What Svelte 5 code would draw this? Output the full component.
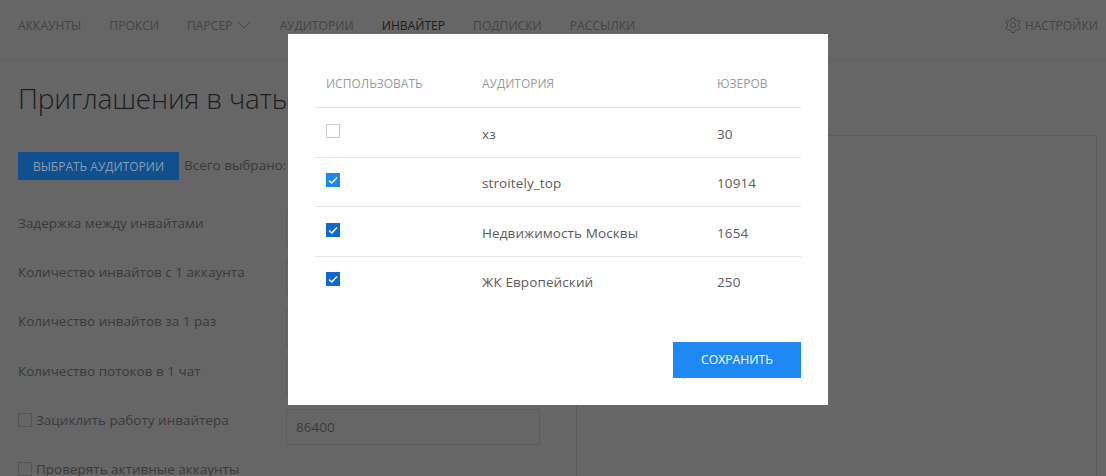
<script lang="ts">
  const navItems = [
    { label: "Аккаунты" },
    { label: "Прокси" },
    { label: "Парсер", caret: true },
    { label: "Аудитории" },
    { label: "Инвайтер", active: true },
    { label: "Подписки" },
    { label: "Рассылки" },
  ];

  const fields = [
    { label: "Задержка между инвайтами", value: "" },
    { label: "Количество инвайтов с 1 аккаунта", value: "" },
    { label: "Количество инвайтов за 1 раз", value: "" },
    { label: "Количество потоков в 1 чат", value: "" },
    { label: "Зациклить работу инвайтера", value: "86400", check: true },
  ];

  let audiences = $state([
    { name: "хз", users: 30, used: false },
    { name: "stroitely_top", users: 10914, used: true, tone: "light" },
    { name: "Недвижимость Москвы", users: 1654, used: true },
    { name: "ЖК Европейский", users: 250, used: true },
  ]);
</script>

<div class="page">
  <header class="topbar">
    <nav class="nav">
      {#each navItems as item}
        <span class="nav-item" class:active={item.active}>
          {item.label}
          {#if item.caret}
            <svg class="caret" viewBox="0 0 14 8" fill="none" stroke="currentColor" stroke-width="1">
              <polyline points="1 1 7 7 13 1"></polyline>
            </svg>
          {/if}
        </span>
      {/each}
    </nav>
    <span class="settings">
      <svg class="gear" viewBox="0 0 24 24" fill="none" stroke="currentColor" stroke-width="1.3">
        <circle cx="12" cy="12" r="3.4"></circle>
        <path d="M10 2.5h4l.6 3 2.1 1.2 2.9-1 2 3.4-2.3 2v2.4l2.3 2-2 3.4-2.9-1-2.1 1.2-.6 3h-4l-.6-3-2.1-1.2-2.9 1-2-3.4 2.3-2v-2.4l-2.3-2 2-3.4 2.9 1 2.1-1.2z"></path>
      </svg>
      Настройки
    </span>
  </header>

  <main class="content">
    <h1>Приглашения в чаты</h1>
    <div class="columns">
      <div class="form">
        <div class="picker">
          <button type="button" class="pick-btn">Выбрать аудитории</button>
          <span class="picked">Всего выбрано: 12818</span>
        </div>
        {#each fields as field}
          <div class="field">
            <label class="field-label">
              {#if field.check}<span class="box"></span>{/if}
              {field.label}
            </label>
            <div class="input">{field.value}</div>
          </div>
        {/each}
        <div class="field">
          <label class="field-label"><span class="box"></span>Проверять активные аккаунты</label>
        </div>
      </div>
      <div class="log"></div>
    </div>
  </main>
</div>

<div class="modal" role="dialog">
  <table>
    <thead>
      <tr>
        <th class="col-use">Использовать</th>
        <th class="col-name">Аудитория</th>
        <th>Юзеров</th>
      </tr>
    </thead>
    <tbody>
      {#each audiences as row}
        <tr>
          <td class="col-use">
            <span class="check" class:on={row.used} class:light={row.tone === "light"}>
              {#if row.used}
                <svg viewBox="0 0 14 14" fill="none" stroke="#fff" stroke-width="1.4">
                  <polyline points="3 7.5 5.8 10 11 4.5"></polyline>
                </svg>
              {/if}
            </span>
          </td>
          <td class="col-name">{row.name}</td>
          <td>{row.users}</td>
        </tr>
      {/each}
    </tbody>
  </table>
  <div class="actions">
    <button type="button" class="save">Сохранить</button>
  </div>
</div>

<style>
  :global(body) {
    margin: 0;
    background: #666;
    overflow: hidden;
    font-family: "Open Sans", "Liberation Sans", sans-serif;
  }

  .page {
    height: 476px;
    overflow: hidden;
    color: #3a3a3a;
    font-size: 13.5px;
  }

  .topbar {
    display: flex;
    align-items: center;
    justify-content: space-between;
    height: 50px;
    padding: 0 8px 10px 18px;
    border-bottom: 1px solid #606060;
    text-transform: uppercase;
    font-size: 12.1px;
    color: #444;
  }

  .nav {
    display: flex;
    gap: 28px;
  }

  .nav-item {
    display: flex;
    align-items: center;
    gap: 5px;
  }

  .nav-item.active {
    color: #1c1c1c;
  }

  .caret {
    width: 14px;
    height: 8px;
  }

  .settings {
    display: flex;
    align-items: center;
    gap: 3px;
  }

  .gear {
    width: 18px;
    height: 18px;
  }

  .content {
    padding: 0 9px 0 18px;
  }

  h1 {
    margin: 17px 0 34px;
    font-size: 28px;
    font-weight: 300;
    letter-spacing: -0.2px;
    line-height: 40px;
    color: #1e1e1e;
    white-space: nowrap;
  }

  .columns {
    display: flex;
    gap: 36px;
  }

  .form {
    width: 522px;
    flex: none;
  }

  .picker {
    display: flex;
    align-items: center;
    gap: 5px;
    margin-bottom: 31px;
    white-space: nowrap;
  }

  .picked {
    padding-bottom: 3px;
  }

  .pick-btn {
    width: 161px;
    height: 28px;
    padding: 0;
    border: none;
    background: #10508f;
    color: #8a9cb0;
    font: inherit;
    font-size: 12px;
    text-transform: uppercase;
  }

  .field {
    display: flex;
    align-items: flex-start;
    height: 49.4px;
  }

  .field-label {
    display: flex;
    align-items: center;
    gap: 4px;
    width: 268px;
    height: 23px;
    flex: none;
  }

  .box {
    width: 12px;
    height: 12px;
    border: 1px solid #555;
  }

  .input {
    flex: 1;
    height: 34px;
    padding-left: 9px;
    border: 1px solid #5c5c5c;
    line-height: 34px;
  }

  .log {
    flex: 1;
    height: 400px;
    margin-top: -17px;
    border: 1px solid #5c5c5c;
  }

  .modal {
    position: fixed;
    top: 34px;
    left: 288px;
    box-sizing: border-box;
    width: 540px;
    height: 371px;
    padding: 23px 27px 27px;
    background: #fff;
    font-size: 13.5px;
    letter-spacing: 0.1px;
    color: #5a5a5a;
  }

  table {
    width: 100%;
    border-collapse: collapse;
  }

  th {
    height: 50px;
    padding: 4px 11px 0;
    box-sizing: border-box;
    border-bottom: 1px solid #e6e6e6;
    text-align: left;
    font-size: 12px;
    font-weight: 400;
    letter-spacing: 0;
    text-transform: uppercase;
    color: #999;
  }

  td {
    height: 46px;
    padding: 3px 11px 0;
    border-bottom: 1px solid #e6e6e6;
  }

  tbody tr:nth-child(even) td {
    height: 45px;
  }

  tbody tr:last-child td {
    border-bottom: none;
  }

  .col-use {
    width: 134px;
  }

  .col-name {
    width: 213px;
  }

  .check {
    display: block;
    box-sizing: border-box;
    width: 14px;
    height: 14px;
    margin-top: -6px;
    border: 1px solid #ccc;
  }

  .check svg {
    display: block;
    width: 14px;
    height: 14px;
    margin: -1px;
  }

  .check.on {
    border-color: #1167d0;
    background: #1167d0;
  }

  .check.on.light {
    border-color: #2086f0;
    background: #2086f0;
  }

  .actions {
    display: flex;
    justify-content: flex-end;
    margin-top: 37px;
  }

  .save {
    width: 128px;
    height: 36px;
    border: none;
    background: #2088f2;
    color: #fff;
    font: inherit;
    font-size: 12.2px;
    letter-spacing: 0;
    text-transform: uppercase;
  }
</style>
